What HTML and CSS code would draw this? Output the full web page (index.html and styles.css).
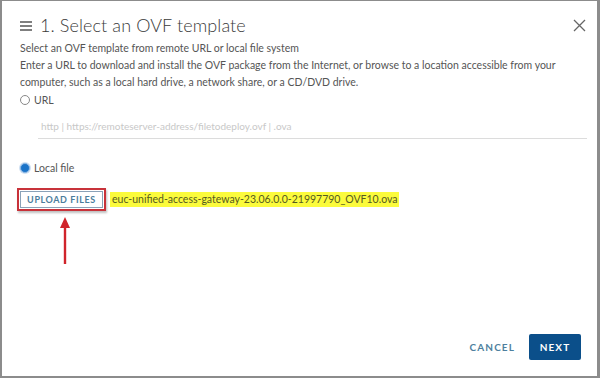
FILE: index.html
```html
<!DOCTYPE html>
<html>
<head>
<meta charset="utf-8">
<link rel="stylesheet" href="styles.css">
</head>
<body>
<div class="dialog">
  <div class="header">
    <svg class="menu" width="12" height="10" viewBox="0 0 12 10"><path d="M0 1h12M0 5h12M0 9h12" stroke="#555" stroke-width="1.3"/></svg>
    <h1 class="title">1. Select an OVF template</h1>
    <svg class="close" width="13" height="13" viewBox="0 0 13 13"><path d="M1 1l11 11M12 1L1 12" stroke="#666" stroke-width="1.3"/></svg>
  </div>
  <div class="body">
    <p class="desc">Select an OVF template from remote URL or local file system</p>
    <p class="desc">Enter a URL to download and install the OVF package from the Internet, or browse to a location accessible from your computer, such as a local hard drive, a network share, or a CD/DVD drive.</p>
    <label class="radio"><span class="circle"></span>URL</label>
    <div class="input">http | https://remoteserver-address/filetodeploy.ovf | .ova</div>
    <label class="radio local"><span class="circle checked"></span>Local file</label>
    <div class="upload-row">
      <div class="redbox"><span class="upload">UPLOAD FILES</span></div>
      <span class="file">euc-unified-access-gateway-23.06.0.0-21997790_OVF10.ova</span>
    </div>
    <svg class="arrow" width="12" height="50" viewBox="0 0 12 50"><path d="M6 10V48" stroke="#d0242b" stroke-width="2.4"/><path d="M1 12L6 1L11 12Z" fill="#d0242b"/></svg>
  </div>
  <div class="footer">
    <span class="cancel">CANCEL</span>
    <span class="next">NEXT</span>
  </div>
</div>
</body>
</html>
```
FILE: styles.css
```css
html, body { margin: 0; padding: 0; }
body {
  background: #8c8c8c;
  width: 600px;
  height: 378px;
  box-sizing: border-box;
  padding: 1px 3px 2px 2px;
  font-family: Lato, "Liberation Sans", sans-serif;
}
.dialog {
  background: #fff;
  height: 375px;
  display: flex;
  flex-direction: column;
  box-sizing: border-box;
}
.header {
  display: flex;
  align-items: center;
  padding: 10px 11px 0 18px;
  height: 28px;
}
.menu { margin-right: 8px; margin-top: 1px; }
.title {
  margin: 0;
  font-weight: 300;
  font-size: 18px;
  letter-spacing: 0.1px;
  color: #3a3a3a;
  flex: 1;
}
.body {
  padding: 0 10px 0 18px;
  display: flex;
  flex-direction: column;
}
.desc {
  margin: 0;
  font-size: 10.5px;
  line-height: 17px;
  color: #555;
}
.desc:first-child { margin-top: 1px; }
.radio {
  display: flex;
  align-items: center;
  font-size: 10.5px;
  color: #555;
  height: 18px;
  margin-top: 0;
}
.circle {
  width: 8px;
  height: 8px;
  border: 1px solid #888;
  border-radius: 50%;
  margin-right: 4px;
  box-sizing: content-box;
}
.circle.checked {
  background: #1a73c8;
  border-color: #8ab6e4;
  box-shadow: 0 0 0 1px #cfe0f2;
}
.input {
  margin: 10px 0 0 18px;
  padding: 0 0 5px 3px;
  font-size: 10px;
  color: #c8c8c8;
  border-bottom: 1px solid #dcdcdc;
  line-height: 14px;
}
.radio.local { margin-top: 20px; }
.upload-row {
  display: flex;
  align-items: center;
  margin-top: 11px;
  margin-left: -3px;
}
.redbox {
  border: 2px solid #c8323a;
  padding: 1px 1px;
  box-shadow: 1px 2px 2px rgba(0,0,0,0.25);
}
.upload {
  display: block;
  border: 1px solid #8aa2b8;
  width: 81px;
  height: 15px;
  line-height: 15px;
  text-align: center;
  font-size: 9px;
  font-weight: 700;
  letter-spacing: 0.6px;
  color: #4b7d9c;
}
.file {
  margin-left: 4px;
  background: #fbfb3c;
  padding: 1px 2px;
  font-size: 10.5px;
  line-height: 13px;
  color: #555a20;
}
.arrow { margin: 5px 0 0 39px; }
.footer {
  margin-top: auto;
  display: flex;
  align-items: center;
  justify-content: flex-end;
  padding: 0 16px 16px 0;
}
.cancel {
  font-size: 10px;
  font-weight: 700;
  letter-spacing: 1.1px;
  color: #4e7f9e;
  margin-right: 14px;
}
.next {
  background: #0b4f8a;
  color: #fff;
  font-size: 10px;
  font-weight: 700;
  letter-spacing: 1.1px;
  width: 52px;
  height: 26px;
  line-height: 26px;
  text-align: center;
  border-radius: 2px;
}
```
